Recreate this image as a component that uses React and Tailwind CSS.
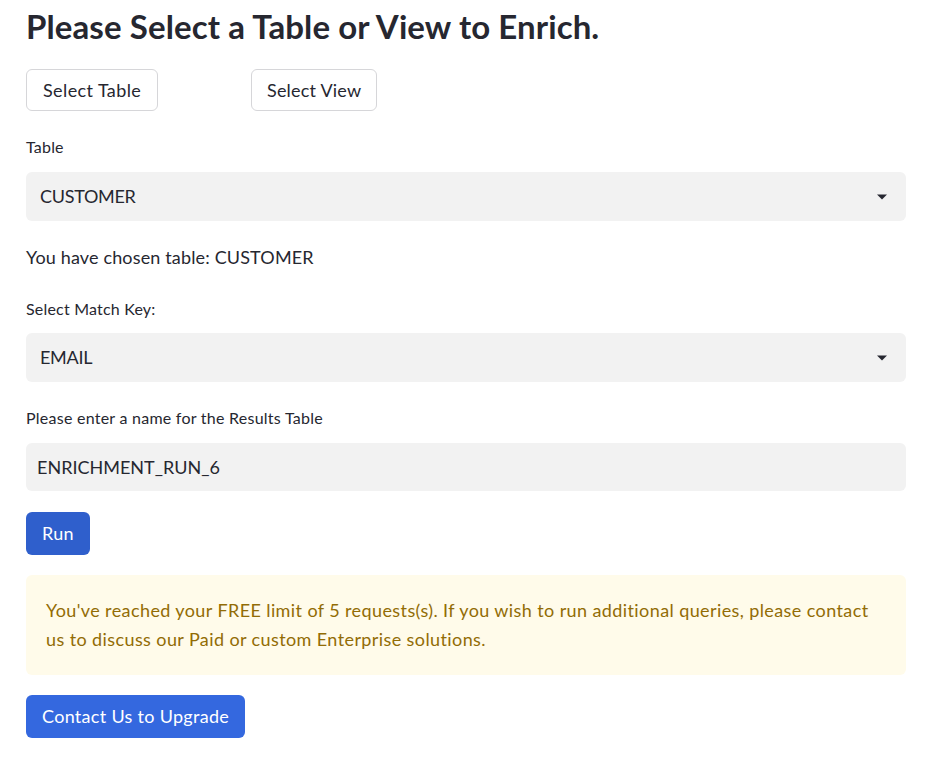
import { useState } from 'react';

function Caret() {
  return (
    <svg width="12" height="8" viewBox="0 0 12 8" className="shrink-0">
      <path d="M1 1.5h10L6 6.5z" fill="#262730" />
    </svg>
  );
}

function SelectBox({ value }) {
  return (
    <div className="flex h-[49px] items-center justify-between rounded-md bg-[#f2f2f2] pl-[14px] pr-[18px] text-[18px] text-[#262730]">
      <span className="tracking-[-0.3px]">{value}</span>
      <Caret />
    </div>
  );
}

export default function App() {
  const [tableName, setTableName] = useState('ENRICHMENT_RUN_6');

  return (
    <div
      className="min-h-screen bg-white px-[26px] pt-[6px] text-[#262730]"
      style={{ fontFamily: 'Lato, "Noto Sans", sans-serif' }}
    >
      <h1 className="text-[33px] font-bold leading-[40px] tracking-[0.1px]">
        Please Select a Table or View to Enrich.
      </h1>

      <div className="mt-[23px] grid w-[880px] grid-cols-4 gap-4">
        <div>
          <button className="h-[42px] rounded-md border border-[#d6d6d9] bg-white px-[16px] text-[18px] tracking-[0.4px]">
            Select Table
          </button>
        </div>
        <div>
          <button className="ml-[1px] h-[42px] rounded-md border border-[#d6d6d9] bg-white px-[15px] text-[18px] tracking-[0.2px]">
            Select View
          </button>
        </div>
      </div>

      <div className="mt-[25px] w-[880px]">
        <label className="block text-[16px] leading-[22px] tracking-[0.2px]">Table</label>
        <div className="mt-[14px]">
          <SelectBox value="CUSTOMER" />
        </div>

        <p className="mt-[23px] text-[18px] leading-[26px] tracking-[0.15px]">You have chosen table: CUSTOMER</p>

        <label className="mt-[28px] block text-[16px] leading-[22px] tracking-[0.2px]">Select Match Key:</label>
        <div className="mt-[13px]">
          <SelectBox value="EMAIL" />
        </div>

        <label className="mt-[25px] block text-[16px] leading-[22px] tracking-[0.25px]">
          Please enter a name for the Results Table
        </label>
        <input
          type="text"
          value={tableName}
          onChange={(e) => setTableName(e.target.value)}
          className="mt-[14px] block h-[48px] w-full rounded-md bg-[#f2f2f2] px-[11px] text-[18px] text-[#262730] outline-none"
        />

        <button className="mt-[21px] h-[43px] rounded-md bg-[#2f5fcc] px-[16px] text-[18px] tracking-[0.3px] text-white">
          Run
        </button>

        <div className="mt-[20px] rounded-md bg-[#fffbea] px-[20px] py-[21px] text-[18px] leading-[29px] tracking-[0.4px] text-[#926c05]">
          You've reached your FREE limit of 5 requests(s). If you wish to run additional queries, please contact
          us to discuss our Paid or custom Enterprise solutions.
        </div>

        <button className="mt-[20px] h-[43px] rounded-md bg-[#3468df] px-[16px] text-[18px] tracking-[0.3px] text-white">
          Contact Us to Upgrade
        </button>
      </div>
    </div>
  );
}
